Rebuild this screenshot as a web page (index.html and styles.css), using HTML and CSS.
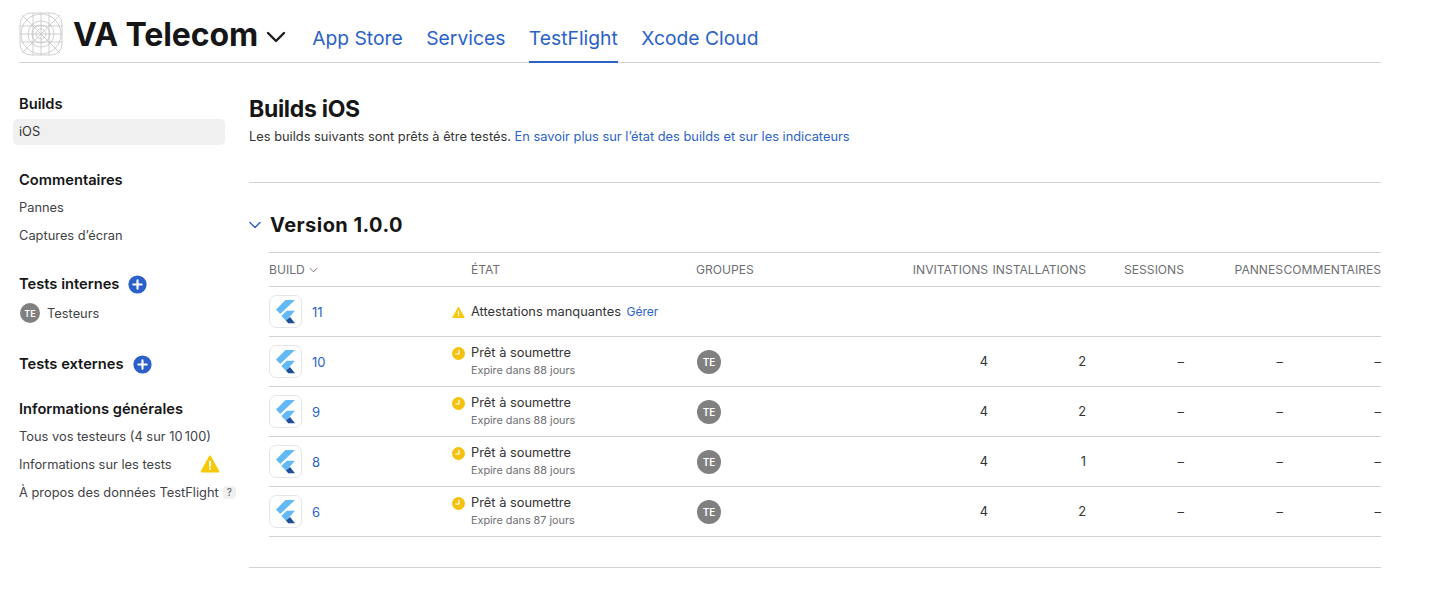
FILE: index.html
```html
<!DOCTYPE html>
<html lang="fr">
<head>
<meta charset="utf-8">
<title>TestFlight</title>
<link rel="stylesheet" href="styles.css">
</head>
<body>
<svg class="defs" width="0" height="0" aria-hidden="true">
  <defs>
    <symbol id="flutter" viewBox="0 0 19 24">
      <path fill="#62b9f6" d="M19 0H9.5L0 9.5l4.2 4.4z"/>
      <path fill="#62b9f6" d="M19 10.7H10.7L5.3 16l4.7 4.7z"/>
      <path fill="#1f4e99" d="M10 20.6l4-3.6 5 6.3h-6.8z"/>
    </symbol>
    <symbol id="warn" viewBox="0 0 16 16">
      <path fill="#f8c808" stroke="#f8c808" stroke-width="1.6" stroke-linejoin="round" d="M8 2 14.6 14H1.4z"/>
      <rect x="7.2" y="5.6" width="1.6" height="4.6" fill="#fff"/>
      <rect x="7.2" y="11" width="1.6" height="1.6" fill="#fff"/>
    </symbol>
    <symbol id="clock" viewBox="0 0 16 16">
      <circle cx="8" cy="8" r="8" fill="#f4c20d"/>
      <path fill="none" stroke="#fff" stroke-width="1.5" d="M8.6 3.4v5.2H4"/>
    </symbol>
    <symbol id="plus" viewBox="0 0 20 20">
      <circle cx="10" cy="10" r="9.6" fill="#2b60c9"/>
      <path stroke="#fff" stroke-width="2.2" stroke-linecap="round" d="M10 5.6v8.8M5.6 10h8.8"/>
    </symbol>
  </defs>
</svg>
<div class="page">
  <header class="topbar">
    <svg class="app-icon" viewBox="0 0 44 44" fill="none" stroke="#c4c4c4" stroke-width="0.8">
      <rect x="1" y="1" width="42" height="42" rx="11"/>
      <circle cx="22" cy="22" r="20"/>
      <circle cx="22" cy="22" r="13"/>
      <circle cx="22" cy="22" r="9"/>
      <circle cx="22" cy="22" r="5"/>
      <path d="M3 3 41 41M41 3 3 41M1 22h42M22 1v42M14 1v42M30 1v42M1 14h42M1 30h42"/>
    </svg>
    <h1 class="app-name">VA Telecom</h1>
    <svg class="app-chevron" viewBox="0 0 20 12" fill="none" stroke="#1d1d1f" stroke-width="2.4" stroke-linecap="round" stroke-linejoin="round"><path d="M2 2l8 8 8-8"/></svg>
    <nav class="tabs">
      <a class="tab">App Store</a>
      <a class="tab">Services</a>
      <a class="tab tab-active">TestFlight</a>
      <a class="tab">Xcode Cloud</a>
    </nav>
  </header>
  <div class="columns">
    <aside class="sidebar">
      <h3 class="side-title side-builds">Builds</h3>
      <a class="side-item side-selected">iOS</a>
      <h3 class="side-title side-comments">Commentaires</h3>
      <a class="side-item">Pannes</a>
      <a class="side-item">Captures d’écran</a>
      <h3 class="side-title side-internal">Tests internes <svg class="plus"><use href="#plus"/></svg></h3>
      <a class="side-item side-group"><span class="avatar">TE</span>Testeurs</a>
      <h3 class="side-title side-external">Tests externes <svg class="plus"><use href="#plus"/></svg></h3>
      <h3 class="side-title side-info">Informations générales</h3>
      <a class="side-item">Tous vos testeurs (4 sur 10&#8239;100)</a>
      <a class="side-item">Informations sur les tests <svg class="side-warn"><use href="#warn"/></svg></a>
      <a class="side-item">À propos des données TestFlight <span class="help">?</span></a>
    </aside>
    <main class="content">
      <h2 class="page-title">Builds iOS</h2>
      <p class="intro">Les builds suivants sont prêts à être testés. <a class="link">En savoir plus sur l’état des builds et sur les indicateurs</a></p>
      <section class="version">
        <div class="version-head">
          <svg class="version-chevron" viewBox="0 0 12 8" fill="none" stroke="#2b60c9" stroke-width="1.4" stroke-linecap="round" stroke-linejoin="round"><path d="M1 1.5l5 5 5-5"/></svg>
          <h2 class="version-title">Version 1.0.0</h2>
        </div>
        <div class="table">
          <div class="row row-head">
            <div class="cell-build">BUILD <svg class="sort" viewBox="0 0 10 6" fill="none" stroke="#666" stroke-width="1"><path d="M1 1l4 4 4-4"/></svg></div>
            <div class="cell-state">ÉTAT</div>
            <div>GROUPES</div>
            <div class="num">INVITATIONS</div>
            <div class="num">INSTALLATIONS</div>
            <div class="num">SESSIONS</div>
            <div class="num">PANNES</div>
            <div class="num">COMMENTAIRES</div>
          </div>
          <div class="row">
            <div class="cell-build"><span class="thumb"><svg class="flutter"><use href="#flutter"/></svg></span><a class="build-no">11</a></div>
            <div class="cell-state"><svg class="state-icon"><use href="#warn"/></svg><span class="state-text">Attestations manquantes <a class="manage">Gérer</a></span></div>
            <div></div><div></div><div></div><div></div><div></div><div></div>
          </div>
          <div class="row">
            <div class="cell-build"><span class="thumb"><svg class="flutter"><use href="#flutter"/></svg></span><a class="build-no">10</a></div>
            <div class="cell-state"><svg class="state-icon"><use href="#clock"/></svg><span class="state-text">Prêt à soumettre<small class="expire">Expire dans 88 jours</small></span></div>
            <div><span class="avatar avatar-lg">TE</span></div>
            <div class="num">4</div><div class="num">2</div><div class="num">–</div><div class="num">–</div><div class="num">–</div>
          </div>
          <div class="row">
            <div class="cell-build"><span class="thumb"><svg class="flutter"><use href="#flutter"/></svg></span><a class="build-no">9</a></div>
            <div class="cell-state"><svg class="state-icon"><use href="#clock"/></svg><span class="state-text">Prêt à soumettre<small class="expire">Expire dans 88 jours</small></span></div>
            <div><span class="avatar avatar-lg">TE</span></div>
            <div class="num">4</div><div class="num">2</div><div class="num">–</div><div class="num">–</div><div class="num">–</div>
          </div>
          <div class="row">
            <div class="cell-build"><span class="thumb"><svg class="flutter"><use href="#flutter"/></svg></span><a class="build-no">8</a></div>
            <div class="cell-state"><svg class="state-icon"><use href="#clock"/></svg><span class="state-text">Prêt à soumettre<small class="expire">Expire dans 88 jours</small></span></div>
            <div><span class="avatar avatar-lg">TE</span></div>
            <div class="num">4</div><div class="num">1</div><div class="num">–</div><div class="num">–</div><div class="num">–</div>
          </div>
          <div class="row">
            <div class="cell-build"><span class="thumb"><svg class="flutter"><use href="#flutter"/></svg></span><a class="build-no">6</a></div>
            <div class="cell-state"><svg class="state-icon"><use href="#clock"/></svg><span class="state-text">Prêt à soumettre<small class="expire">Expire dans 87 jours</small></span></div>
            <div><span class="avatar avatar-lg">TE</span></div>
            <div class="num">4</div><div class="num">2</div><div class="num">–</div><div class="num">–</div><div class="num">–</div>
          </div>
        </div>
      </section>
    </main>
  </div>
</div>
</body>
</html>
```

FILE: styles.css
```css
* { box-sizing: border-box; }
html, body { margin: 0; padding: 0; background: #fff; overflow: hidden; }
body {
  font-family: Inter, "Liberation Sans", sans-serif;
  color: #1d1d1f;
  height: 615px;
}
.defs { position: absolute; }
.page { margin-left: 19px; width: 1362px; }

.topbar {
  display: flex;
  align-items: center;
  height: 63px;
  border-bottom: 1px solid #d2d2d2;
}
.app-icon { width: 44px; height: 44px; margin-top: 5px; flex: none; }
.app-name {
  margin: 6px 0 0 10px;
  font-size: 32px;
  font-weight: 700;
  letter-spacing: -0.1px;
  color: #161617;
}
.app-chevron { width: 20px; height: 12px; margin: 11px 0 0 8px; flex: none; }
.tabs { display: flex; gap: 23.5px; margin-left: 26px; align-self: stretch; }
.tab {
  font-size: 19.3px;
  color: #2a62c8;
  line-height: 24px;
  padding-top: 26px;
  height: 63px;
}
.tab-active { border-bottom: 2px solid #2a62c8; }

.columns { display: flex; }
.sidebar { width: 230px; flex: none; display: flex; flex-direction: column; }
.side-title {
  margin: 0;
  font-size: 14.7px;
  font-weight: 600;
  line-height: 20px;
  color: #161617;
  display: flex;
  align-items: center;
  gap: 9px;
}
.side-builds { margin-top: 31px; }
.side-comments { margin-top: 25px; margin-bottom: 3px; }
.side-internal { margin-top: 25px; }
.side-external { margin-top: 25px; }
.side-info { margin-top: 25px; margin-bottom: 3px; }
.side-item {
  display: flex;
  align-items: center;
  height: 28px;
  color: #424245;
  font-size: 12.85px;
  white-space: nowrap;
}
.side-selected {
  background: #f0f0f0;
  border-radius: 5px;
  margin: 5px 24px 0 -6px;
  padding: 0 0 2px 6px;
  height: 26px;
  color: #333;
}
.side-group { height: 32px; margin-top: 3px; gap: 7px; margin-left: 1px; }
.plus { width: 19px; height: 19px; flex: none; }
.avatar {
  display: inline-flex;
  align-items: center;
  justify-content: center;
  width: 20px;
  height: 20px;
  border-radius: 50%;
  background: #808080;
  color: #fff;
  font-size: 9px;
  font-weight: 600;
}
.avatar-lg { width: 24px; height: 24px; font-size: 10px; margin-left: 1px; }
.side-warn { width: 20px; height: 20px; margin-left: 28px; flex: none; }
.help {
  display: inline-flex;
  align-items: center;
  justify-content: center;
  width: 13px;
  height: 13px;
  margin-left: 4px;
  border-radius: 4px;
  background: #f0f0f0;
  color: #555;
  font-size: 10px;
}

.content { flex: 1; min-width: 0; }
.page-title {
  margin: 32px 0 0;
  font-size: 23px;
  font-weight: 700;
  line-height: 28px;
  letter-spacing: -0.3px;
  color: #161617;
}
.intro {
  margin: 5px 0 0;
  padding-bottom: 36px;
  font-size: 12.85px;
  line-height: 18px;
  color: #333;
  border-bottom: 1px solid #d2d2d2;
}
.link { color: #2a62c8; }
.version { border-bottom: 1px solid #d2d2d2; padding-bottom: 30px; }
.version-head { display: flex; align-items: center; height: 69px; padding-top: 14px; }
.version-chevron { width: 12px; height: 8px; flex: none; }
.version-title {
  margin: 0 0 0 9px;
  font-size: 20px;
  font-weight: 700;
  letter-spacing: 0.45px;
  color: #161617;
}
.table { margin-left: 20px; border-top: 1px solid #d2d2d2; }
.row {
  display: grid;
  grid-template-columns: 183px 244px 194px 98px 98px 98px 99px 98px;
  align-items: center;
  height: 50px;
  border-bottom: 1px solid #d2d2d2;
  font-size: 12.85px;
  color: #333;
}
.row-head { height: 34px; font-size: 12.1px; color: #6e6e73; }
.row-head .cell-state { padding-left: 19px; }
.cell-build { display: flex; align-items: center; gap: 4px; }
.cell-state { display: flex; align-items: center; }
.sort { width: 9px; height: 6px; flex: none; }
.thumb {
  display: flex;
  align-items: center;
  justify-content: center;
  width: 33px;
  height: 33px;
  border: 1px solid #e6e6e6;
  border-radius: 7px;
  margin-right: 6px;
  flex: none;
}
.flutter { width: 19px; height: 24px; }
.build-no { color: #2a62c8; font-size: 13px; }
.state-icon { width: 13px; height: 13px; margin-right: 6px; flex: none; align-self: flex-start; margin-top: 2px; }
.state-text { display: flex; flex-direction: column; line-height: 16px; }
.state-text:has(.manage) { display: block; }
.manage { color: #2a62c8; font-size: 12px; margin-left: 2px; }
.expire { font-size: 10.8px; color: #6e6e73; line-height: 14px; margin-top: 3px; }
.num { text-align: right; white-space: nowrap; }
```
